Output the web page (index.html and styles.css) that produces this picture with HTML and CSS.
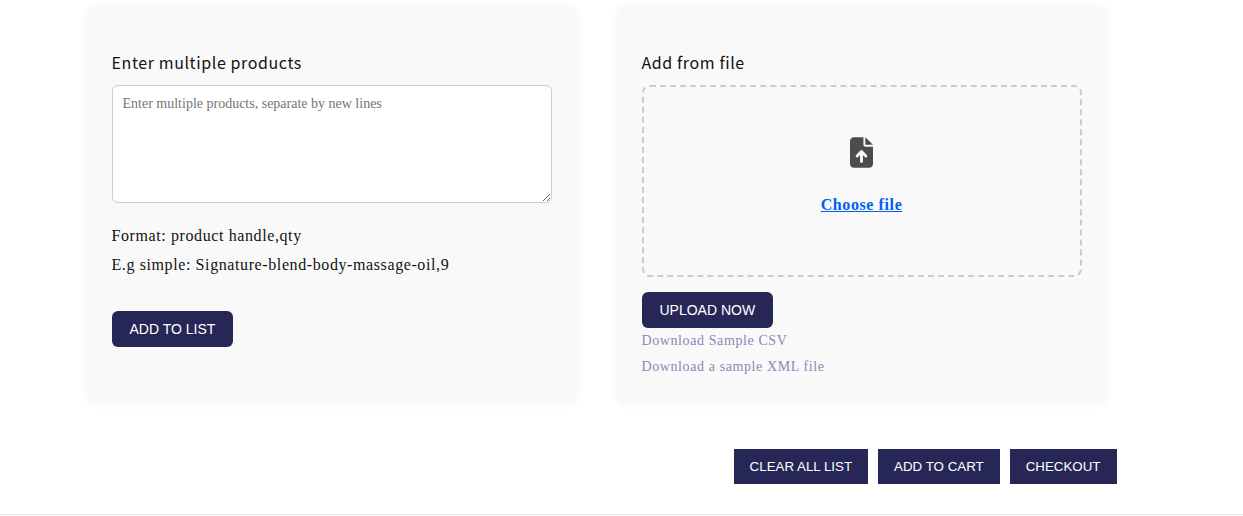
FILE: index.html
```html
<!DOCTYPE html>
<html lang="en">
<head>
<meta charset="utf-8">
<meta name="viewport" content="width=device-width, initial-scale=1">
<title>Quick order</title>
<link rel="stylesheet" href="styles.css">
</head>
<body>
<main class="quick-order">
  <div class="panels">
    <section class="panel">
      <h2 class="panel-title"><label for="products">Enter multiple products</label></h2>
      <textarea class="products" id="products" placeholder="Enter multiple products, separate by new lines"></textarea>
      <div class="hints">
        <p>Format: product handle,qty</p>
        <p>E.g simple: Signature-blend-body-massage-oil,9</p>
      </div>
      <button class="button button-rounded" type="button">ADD TO LIST</button>
    </section>
    <section class="panel">
      <h2 class="panel-title">Add from file</h2>
      <div class="dropzone">
        <svg class="file-icon" viewBox="0 0 384 512" aria-hidden="true">
          <path fill="currentColor" d="M64 0C29 0 0 29 0 64v384c0 35 29 64 64 64h256c35 0 64-29 64-64V160H256c-18 0-32-14-32-32V0H64z"/>
          <path fill="currentColor" d="M256 0v128h128z"/>
          <path class="file-arrow" d="M192 408V252M119 313l73-73 73 73"/>
        </svg>
        <a class="choose" href="#">Choose file</a>
      </div>
      <button class="button button-rounded" type="button">UPLOAD NOW</button>
      <div class="samples">
        <a href="#">Download Sample CSV</a>
        <a href="#">Download a sample XML file</a>
      </div>
    </section>
  </div>
  <div class="actions">
    <button class="button" type="button">CLEAR ALL LIST</button>
    <button class="button" type="button">ADD TO CART</button>
    <button class="button" type="button">CHECKOUT</button>
  </div>
</main>
<footer class="footer"></footer>
</body>
</html>
```
FILE: styles.css
```css
*, *::before, *::after {
  box-sizing: border-box;
}

html {
  font-size: 62.5%;
}

body {
  margin: 0;
  background: #fff;
  color: #121212;
  font-family: "Liberation Serif", "Times New Roman", serif;
  font-size: 16px;
  line-height: 29px;
  letter-spacing: 0.06rem;
}

.quick-order {
  max-width: 1100px;
  margin: 0 auto;
  padding: 7px 55px 30px 5px;
}

.panels {
  display: grid;
  grid-template-columns: 1fr 1fr;
  gap: 40px;
  padding: 0 10px;
}

.panel {
  padding: 43px 25px 24px;
  border-radius: 10px;
  background: #f9f9f9;
  box-shadow: 0 0 8px rgba(0, 0, 0, 0.05);
}

.panel-title {
  margin: 0 0 11px;
  font-family: "Noto Sans CJK SC", "Noto Sans", sans-serif;
  font-size: 16px;
  font-weight: 400;
  line-height: 24px;
}

.products {
  display: block;
  width: 100%;
  height: 118px;
  padding: 10px;
  border: 1px solid #ccc;
  border-radius: 6px;
  background: #fff;
  font-family: inherit;
  font-size: 14px;
  line-height: 16px;
}

.hints {
  margin: 18px 0 32px;
}

.hints p {
  margin: 0;
}

.dropzone {
  display: flex;
  flex-direction: column;
  align-items: center;
  justify-content: center;
  gap: 22px;
  height: 192px;
  margin-bottom: 15px;
  padding-bottom: 6px;
  border: 2px dashed #ccc;
  border-radius: 8px;
}

.file-icon {
  display: block;
  width: 23px;
  height: 31px;
  color: #4c4c4c;
}

.file-arrow {
  fill: none;
  stroke: #f9f9f9;
  stroke-width: 48;
  stroke-linecap: round;
  stroke-linejoin: round;
}

.choose {
  color: #0060f0;
  font-weight: 700;
}

.samples {
  display: flex;
  flex-direction: column;
  align-items: flex-start;
  font-size: 14px;
  line-height: 26px;
}

.samples a {
  color: #8b88b3;
  text-decoration: none;
}

.button {
  display: block;
  padding: 10px 16px;
  border: 0;
  background: #272757;
  color: #fff;
  font-family: "Liberation Sans", Arial, sans-serif;
  font-size: smaller;
  line-height: 15px;
  cursor: pointer;
}

.button-rounded {
  padding: 10px 18px;
  border-radius: 6px;
  font-size: 14px;
  line-height: 16px;
}

.actions {
  display: flex;
  flex-wrap: wrap;
  justify-content: flex-end;
  gap: 10px;
  margin-top: 45px;
}

.footer {
  border-top: 1px solid #e7e7e7;
}
```
